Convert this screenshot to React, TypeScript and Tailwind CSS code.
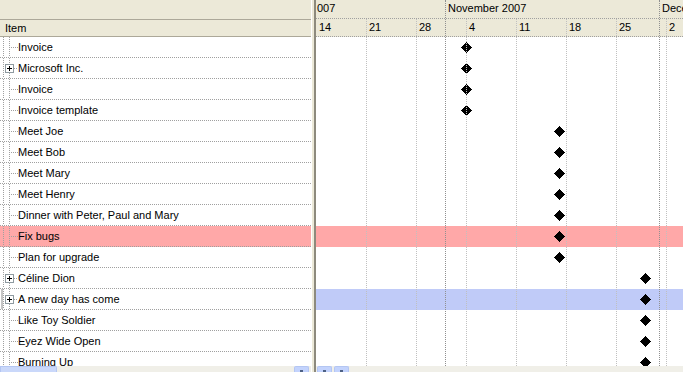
import React from "react";

type Row = { label: string; x: number; plus?: boolean; band?: "pink" | "blue" };

const rows: Row[] = [
  { label: "Invoice", x: 150 },
  { label: "Microsoft Inc.", x: 150, plus: true },
  { label: "Invoice", x: 150 },
  { label: "Invoice template", x: 150 },
  { label: "Meet Joe", x: 243 },
  { label: "Meet Bob", x: 243 },
  { label: "Meet Mary", x: 243 },
  { label: "Meet Henry", x: 243 },
  { label: "Dinner with Peter, Paul and Mary", x: 243 },
  { label: "Fix bugs", x: 243, band: "pink" },
  { label: "Plan for upgrade", x: 243 },
  { label: "Céline Dion", x: 329, plus: true },
  { label: "A new day has come", x: 329, plus: true, band: "blue" },
  { label: "Like Toy Soldier", x: 329 },
  { label: "Eyez Wide Open", x: 329 },
  { label: "Burning Up", x: 329 },
];

// x offsets inside the chart panel (one week = 50px)
const weeks = ["14", "21", "28", "4", "11", "18", "25", "2"];
const weekLines = [50, 100, 150, 200, 250, 300, 350];
const monthLines = [129, 343];

function TreeGutter({ plus }: { plus?: boolean }) {
  const dot = { stroke: "#a0a0a0", strokeDasharray: "1 1" };
  return (
    <svg width="18" height="20" className="shrink-0" shapeRendering="crispEdges">
      <line x1="3.5" y1="0" x2="3.5" y2="20" {...dot} />
      {plus ? (
        <>
          <line x1="9.5" y1="0" x2="9.5" y2="6" {...dot} />
          <line x1="9.5" y1="15" x2="9.5" y2="20" {...dot} />
          <rect x="5.5" y="6.5" width="8" height="8" fill="#fff" stroke="#8e9aa0" />
          <line x1="7" y1="10.5" x2="12" y2="10.5" stroke="#000" />
          <line x1="9.5" y1="8" x2="9.5" y2="13" stroke="#000" />
          <line x1="14" y1="10.5" x2="18" y2="10.5" {...dot} />
        </>
      ) : (
        <>
          <line x1="9.5" y1="0" x2="9.5" y2="20" {...dot} />
          <line x1="11" y1="10.5" x2="18" y2="10.5" {...dot} />
        </>
      )}
    </svg>
  );
}

function Diamond({ x, row }: { x: number; row: number }) {
  return (
    <svg
      width="11"
      height="11"
      className="absolute"
      style={{ left: x - 5, top: row * 21 + 5 }}
      shapeRendering="crispEdges"
    >
      <polygon points="5.5,0 11,5.5 5.5,11 0,5.5" fill="#000" />
    </svg>
  );
}

function ScrollButton() {
  return (
    <div className="w-[15px] h-[6px] rounded-t-[2px] border border-b-0 border-[#b4c6f2] bg-[#c3d3fd] flex justify-center pt-[3px]">
      <div className="w-[3px] h-[3px] bg-[#4d6185]" />
    </div>
  );
}

export default function App() {
  return (
    <div className="w-[683px] h-[372px] flex overflow-hidden bg-[#ece9d8] text-[11px] text-black font-['Liberation_Sans',Arial,sans-serif] leading-none">
      {/* Item list */}
      <div className="w-[311px] flex flex-col">
        <div className="h-[20px] border-b border-[#aca899] bg-[#ece9d8]" />
        <div className="h-[17px] border-b border-[#aca899] bg-[#ece9d8] flex items-center pl-[5px]">Item</div>
        <div className="h-[329px] bg-white overflow-hidden">
          {rows.map((r, i) => (
            <div
              key={i}
              className={`relative h-[21px] flex items-center border-b border-dotted border-[#a0a0a0] ${
                r.band === "pink" ? "bg-[#ffa8a8]" : ""
              }`}
            >
              {r.band === "blue" && <div className="absolute left-[1px] top-0 w-[2px] h-[20px] bg-[#c4c4c4]" />}
              <TreeGutter plus={r.plus} />
              <span className="whitespace-nowrap">{r.label}</span>
            </div>
          ))}
        </div>
        <div className="h-[6px] bg-[#f0efe8] flex items-start">
          <div className="w-[57px] h-[6px] border border-b-0 border-[#b4c6f2] bg-[#cad8fa] rounded-tr-[2px]" />
          <div className="flex-1" />
          <div className="mr-[2px]">
            <ScrollButton />
          </div>
        </div>
      </div>

      {/* Splitter */}
      <div className="w-[5px] flex">
        <div className="w-[1px] bg-white" />
        <div className="w-[2px] bg-[#ece9d8]" />
        <div className="w-[2px] bg-[#8d8a7d]" />
      </div>

      {/* Chart */}
      <div className="flex-1 flex flex-col overflow-hidden">
        <div className="h-[19px] flex border-b border-dotted border-[#a0a0a0] whitespace-nowrap">
          <div className="w-[129px] shrink-0 pl-[1px] pt-[3px]">007</div>
          <div className="w-[214px] shrink-0 pl-[2px] pt-[3px] border-l border-dotted border-[#909090]">November 2007</div>
          <div className="w-[100px] shrink-0 pl-[2px] pt-[3px] border-l border-dotted border-[#909090] overflow-hidden">December 2007</div>
        </div>
        <div className="relative flex-1 flex flex-col">
          <div className="h-[18px] flex border-b border-dotted border-[#a0a0a0]">
            {weeks.map((w, i) => (
              <div key={i} className="w-[50px] shrink-0 pl-[3px] pt-[3px]">
                {w}
              </div>
            ))}
          </div>
          <div className="relative h-[329px] bg-white overflow-hidden">
            {rows.map((r, i) => (
              <div
                key={i}
                className={`h-[21px] ${
                  r.band === "pink" ? "bg-[#ffa8a8]" : r.band === "blue" ? "bg-[#c0cbf8]" : ""
                }`}
              />
            ))}
            {rows.map((r, i) => (
              <Diamond key={i} x={r.x} row={i} />
            ))}
          </div>
          {/* grid lines over header row and body */}
          {weekLines.map((x) => (
            <div
              key={x}
              className="absolute top-0 bottom-[6px] border-l border-dotted border-[#c0c0c0]"
              style={{ left: x }}
            />
          ))}
          {monthLines.map((x) => (
            <div
              key={x}
              className="absolute top-0 bottom-[6px] border-l border-dotted border-[#909090]"
              style={{ left: x }}
            />
          ))}
          <div className="h-[6px] bg-[#f0efe8] flex items-start gap-[2px] pl-[1px]">
            <ScrollButton />
            <ScrollButton />
          </div>
        </div>
      </div>
    </div>
  );
}
